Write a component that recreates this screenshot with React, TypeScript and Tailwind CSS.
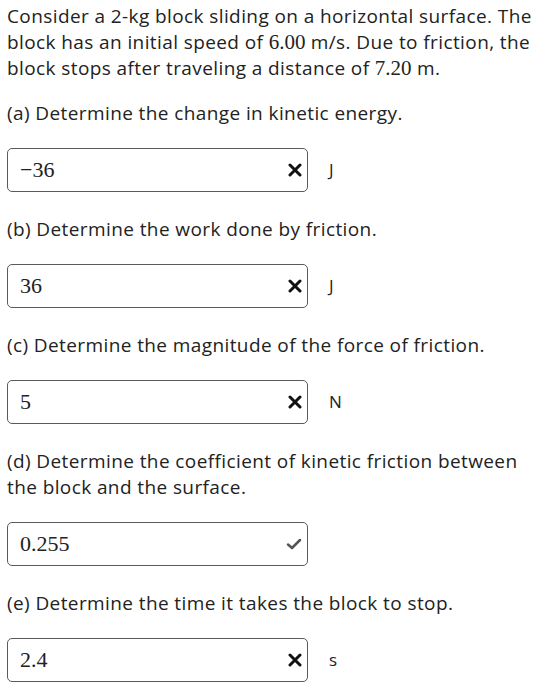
const parts = [
  { label: "(a) Determine the change in kinetic energy.", value: "\u221236", unit: "J", ok: false },
  { label: "(b) Determine the work done by friction.", value: "36", unit: "J", ok: false },
  { label: "(c) Determine the magnitude of the force of friction.", value: "5", unit: "N", ok: false },
  {
    label: "(d) Determine the coefficient of kinetic friction between the block and the surface.",
    value: "0.255",
    unit: "",
    ok: true,
  },
  { label: "(e) Determine the time it takes the block to stop.", value: "2.4", unit: "s", ok: false },
]

function XIcon() {
  return (
    <svg width="14" height="14" viewBox="0 0 14 14" className="shrink-0">
      <path d="M2 2 L12 12 M12 2 L2 12" stroke="#111" strokeWidth="3" strokeLinecap="round" />
    </svg>
  )
}

function CheckIcon() {
  return (
    <svg width="16" height="14" viewBox="0 0 16 14" className="shrink-0">
      <path d="M2 7.5 L6 11 L14 3" stroke="#555" strokeWidth="2.5" fill="none" strokeLinecap="round" strokeLinejoin="round" />
    </svg>
  )
}

export default function App() {
  return (
    <div className="min-h-screen bg-white px-[7px] pt-[3px] font-['Open_Sans',sans-serif] text-[19px] leading-[26px] tracking-[0.4px] text-[#222]">
      <p className="pr-[8px]">
        Consider a 2-kg block sliding on a horizontal surface. The block has an initial speed of{" "}
        <span className="font-[family-name:Liberation_Serif] text-[21px] leading-[26px] tracking-normal">6.00</span>{" "}
        m/s. Due to friction, the block stops after traveling a distance of{" "}
        <span className="font-[family-name:Liberation_Serif] text-[21px] leading-[26px] tracking-normal">7.20</span> m.
      </p>

      {parts.map((p, i) => (
        <div key={i}>
          <p className={i === 0 ? "mt-[19px] pr-[8px]" : "mt-[24px] pr-[8px]"}>{p.label}</p>
          <div className="mt-[22px] flex items-center">
            <div className="flex h-[44px] w-[301px] items-center justify-between rounded-[5px] border-[1.5px] border-[#5a5a5a] pl-[12px] pr-[5px]">
              <span className="font-[family-name:Liberation_Serif] text-[22px] tracking-normal text-[#222]">
                {p.value}
              </span>
              {p.ok ? <CheckIcon /> : <XIcon />}
            </div>
            {p.unit && <span className="ml-[21px] text-[17px]">{p.unit}</span>}
          </div>
        </div>
      ))}
    </div>
  )
}
